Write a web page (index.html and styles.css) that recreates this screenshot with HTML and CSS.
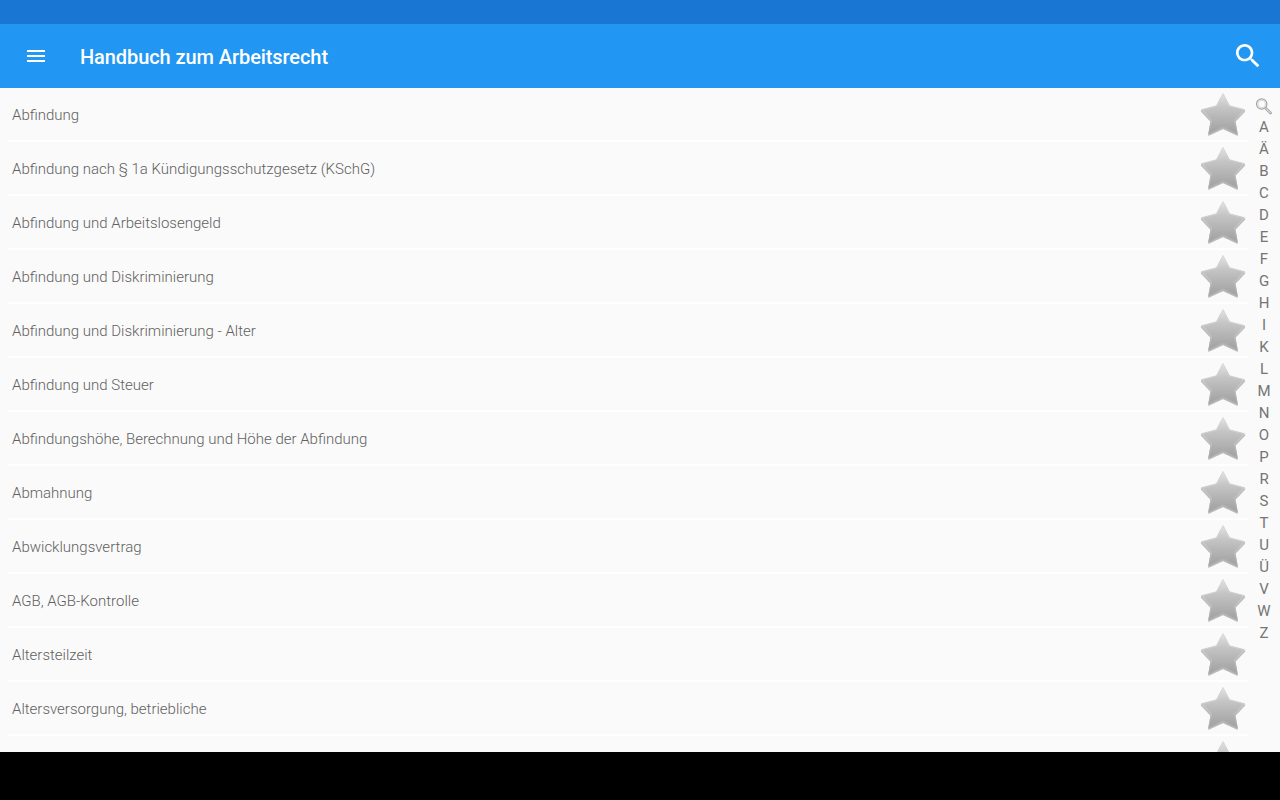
FILE: index.html
```html
<!DOCTYPE html>
<html>
    <head>
        <title>Handbuch zum Arbeitsrecht</title>
        <link rel="stylesheet" href="styles.css">
    </head>
    <body>
        <svg class="defs" width="0" height="0">
            <defs>
                <linearGradient id="stargrad" x1="0" y1="0" x2="0" y2="1">
                    <stop offset="0" stop-color="#e2e2e2"/>
                    <stop offset="0.35" stop-color="#c4c4c4"/>
                    <stop offset="1" stop-color="#a0a0a0"/>
                </linearGradient>
                <linearGradient id="staredge" x1="0" y1="0" x2="0" y2="1">
                    <stop offset="0" stop-color="#dcdcdc"/>
                    <stop offset="0.5" stop-color="#c8c8c8"/>
                    <stop offset="1" stop-color="#a8a8a8"/>
                </linearGradient>
                <filter id="soft" x="-10%" y="-10%" width="120%" height="120%">
                    <feGaussianBlur stdDeviation="0.4"/>
                </filter>
                <symbol id="star" viewBox="0 0 46 46">
                    <path d="M23 1.800 L29.300 13.800 L44.300 17.800 L34.600 28.200 L37 41.500 L23 35 L9 41.500 L11.400 28.200 L1.700 17.800 L16.700 13.800 Z" fill="#7a7a7a" stroke="#7a7a7a" stroke-width="1.800" stroke-linejoin="round" opacity="0.5" transform="translate(0 1.300)" filter="url(#soft)"/>
                    <path d="M23 1.800 L29.300 13.800 L44.300 17.800 L34.600 28.200 L37 41.500 L23 35 L9 41.500 L11.400 28.200 L1.700 17.800 L16.700 13.800 Z" fill="url(#stargrad)" stroke="url(#staredge)" stroke-width="1.300" stroke-linejoin="round" filter="url(#soft)"/>
                </symbol>
            </defs>
        </svg>

        <div class="statusbar"></div>

        <div class="toolbar">
            <svg class="menu-icon" width="24" height="24" viewBox="0 0 24 24">
                <path d="M3 18h18v-2H3v2zm0-5h18v-2H3v2zm0-7v2h18V6H3z" fill="#fff"/>
            </svg>
            <div class="title">Handbuch zum Arbeitsrecht</div>
            <svg class="search-icon" width="32" height="32" viewBox="0 0 24 24">
                <path d="M15.500 14h-.79l-.28-.27C15.410 12.590 16 11.110 16 9.500 16 5.910 13.090 3 9.500 3S3 5.910 3 9.500 5.910 16 9.500 16c1.610 0 3.090-.59 4.230-1.570l.27.28v.79l5 4.990L20.490 19l-4.990-5zm-6 0C7.010 14 5 11.990 5 9.500S7.010 5 9.500 5 14 7.010 14 9.500 11.990 14 9.500 14z" fill="#fff"/>
            </svg>
        </div>

        <div class="content">
            <div class="list">
                <div class="row"><span class="label">Abfindung</span><svg class="star"><use href="#star"/></svg></div>
                <div class="row"><span class="label">Abfindung nach § 1a Kündigungsschutzgesetz (KSchG)</span><svg class="star"><use href="#star"/></svg></div>
                <div class="row"><span class="label">Abfindung und Arbeitslosengeld</span><svg class="star"><use href="#star"/></svg></div>
                <div class="row"><span class="label">Abfindung und Diskriminierung</span><svg class="star"><use href="#star"/></svg></div>
                <div class="row"><span class="label">Abfindung und Diskriminierung - Alter</span><svg class="star"><use href="#star"/></svg></div>
                <div class="row"><span class="label">Abfindung und Steuer</span><svg class="star"><use href="#star"/></svg></div>
                <div class="row"><span class="label">Abfindungshöhe, Berechnung und Höhe der Abfindung</span><svg class="star"><use href="#star"/></svg></div>
                <div class="row"><span class="label">Abmahnung</span><svg class="star"><use href="#star"/></svg></div>
                <div class="row"><span class="label">Abwicklungsvertrag</span><svg class="star"><use href="#star"/></svg></div>
                <div class="row"><span class="label">AGB, AGB-Kontrolle</span><svg class="star"><use href="#star"/></svg></div>
                <div class="row"><span class="label">Altersteilzeit</span><svg class="star"><use href="#star"/></svg></div>
                <div class="row"><span class="label">Altersversorgung, betriebliche</span><svg class="star"><use href="#star"/></svg></div>
                <div class="row"><span class="label"></span><svg class="star"><use href="#star"/></svg></div>
            </div>

            <div class="index">
                <svg class="index-search" width="18" height="18" viewBox="0 0 18 18">
                    <path d="M10.500 11 L15.500 16" stroke="#a8a8a8" stroke-width="2.800" stroke-linecap="round"/>
                    <path d="M10.800 11.300 L15.300 15.800" stroke="#f2f2f2" stroke-width="1" stroke-linecap="round"/>
                    <circle cx="6.700" cy="7" r="5.200" fill="#fdfdfd" stroke="#a4a4a4" stroke-width="1.200"/>
                    <circle cx="6.700" cy="7" r="3.800" fill="none" stroke="#d4d4d4" stroke-width="1"/>
                </svg>
                <div>A</div><div>Ä</div><div>B</div><div>C</div><div>D</div><div>E</div><div>F</div><div>G</div><div>H</div><div>I</div><div>K</div><div>L</div><div>M</div><div>N</div><div>O</div><div>P</div><div>R</div><div>S</div><div>T</div><div>U</div><div>Ü</div><div>V</div><div>W</div><div>Z</div>
            </div>
        </div>

        <div class="navbar"></div>
    </body>
</html>
```

FILE: styles.css
```css
html, body {
    margin: 0;
    height: 100%;
    overflow: hidden;
}

body {
    display: flex;
    flex-direction: column;
    height: 800px;
    background: #fafafa;
    font-family: Roboto, "Liberation Sans", sans-serif;
}

.defs {
    position: absolute;
}

.statusbar {
    height: 24px;
    background: #1976d2;
}

.toolbar {
    display: flex;
    align-items: center;
    height: 64px;
    padding: 0 16px 0 24px;
    background: #2196f3;
    color: #fff;
}

.menu-icon {
    margin-right: 32px;
}

.title {
    flex: 1;
    padding-top: 2px;
    font-size: 20px;
    font-weight: 500;
    letter-spacing: -0.08px;
}

.content {
    display: flex;
    flex: 1;
    min-height: 0;
    overflow: hidden;
}

.list {
    flex: 1;
    padding-left: 8px;
}

.row {
    display: flex;
    align-items: center;
    height: 52px;
    border-bottom: 2px solid #fff;
}

.label {
    flex: 1;
    padding-left: 4px;
    padding-top: 2px;
    font-size: 15px;
    font-weight: 300;
    color: #616161;
}

.star {
    width: 46px;
    height: 46px;
    margin-top: 2px;
    margin-right: 2px;
}

.index {
    display: flex;
    flex-direction: column;
    align-items: center;
    width: 32px;
    padding-top: 9px;
    font-size: 15px;
    line-height: 22px;
    color: #757575;
}

.index-search {
    flex-shrink: 0;
    margin-bottom: 1px;
}

.navbar {
    height: 48px;
    background: #000;
}
```
